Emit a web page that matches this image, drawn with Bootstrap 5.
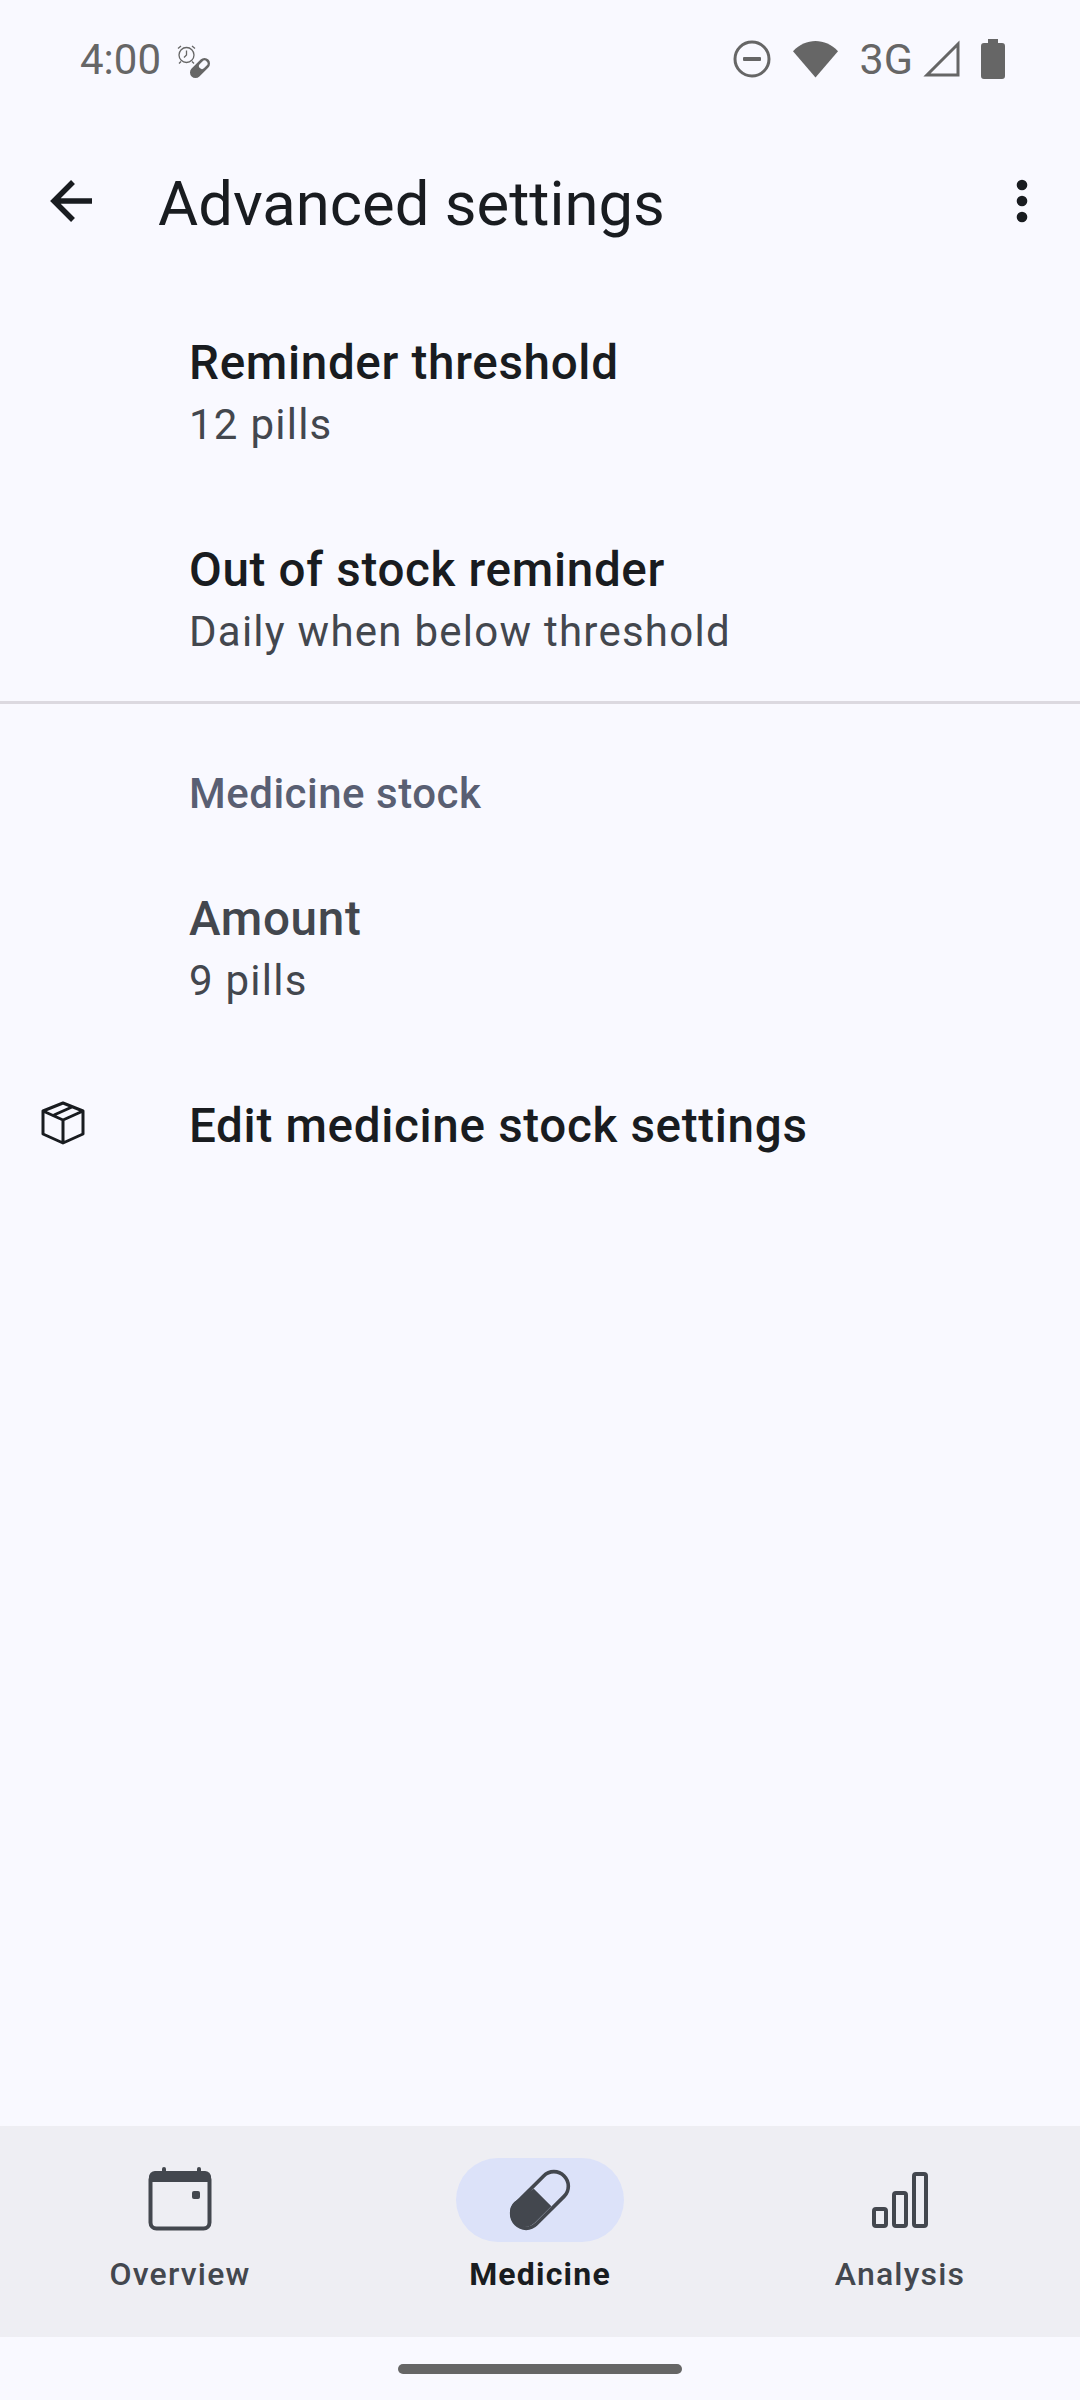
<!DOCTYPE html>
<html lang="en">
<head>
    <meta charset="UTF-8">
    <meta name="viewport" content="width=device-width, initial-scale=1.0">
    <title>Advanced settings</title>
    <link href="https://cdn.jsdelivr.net/npm/bootstrap@5.3.0/dist/css/bootstrap.min.css" rel="stylesheet">
    <style>
        body {
            background-color: #f9f9ff;
            font-family: Roboto, "Liberation Sans", sans-serif;
            color: #191c20;
        }
        .screen {
            width: 1080px;
            height: 2400px;
        }
        .status-bar {
            height: 116px;
            padding: 2px 75px 0 80px;
            color: #666;
        }
        .status-time {
            font-size: 42px;
            line-height: 1;
            margin-top: 2px;
        }
        .status-net {
            font-size: 43px;
            line-height: 1;
            margin: 0 10px 0 22px;
        }
        .status-gap {
            margin-right: 22px;
        }
        .status-gap-small {
            margin-right: 20px;
        }
        .app-bar {
            height: 175px;
            padding-right: 31px;
        }
        .app-bar-back {
            width: 158px;
            padding-left: 50px;
        }
        .app-bar-icon {
            margin-bottom: 5px;
        }
        .app-bar-title {
            font-size: 61.6px;
            line-height: 1;
            margin: 0;
            padding-top: 3px;
            font-weight: 400;
        }
        .pref-row {
            padding-left: 189px;
        }
        .pref-icon {
            width: 189px;
            padding: 0 0 5px 41px;
            margin-left: -189px;
        }
        .pref-title {
            font-size: 47.6px;
            font-weight: 500;
            line-height: 63px;
            letter-spacing: 0.67px;
            margin-top: 1.5px;
        }
        .pref-summary {
            font-size: 42px;
            line-height: 63px;
            letter-spacing: 1.25px;
            margin-top: -1.5px;
            color: #43474e;
        }
        .pref-muted {
            color: #43474e;
        }
        .first-row {
            margin-top: 39px;
            height: 207px;
        }
        .second-row {
            height: 164px;
        }
        .amount-row {
            height: 207px;
        }
        .pref-divider {
            height: 3px;
            background-color: #dcd9e0;
        }
        .group-title {
            font-size: 42px;
            font-weight: 500;
            line-height: 48px;
            letter-spacing: 0.5px;
            color: #595f73;
            padding-top: 66px;
            height: 182px;
        }
        .bottom-nav {
            height: 211px;
            margin-top: auto;
            background-color: #eeeef3;
        }
        .nav-cell {
            width: 360px;
            padding-top: 32px;
        }
        .nav-pill {
            width: 168px;
            height: 84px;
            border-radius: 42px;
        }
        .nav-pill-active {
            background-color: #dce2f9;
        }
        .nav-label {
            font-size: 32px;
            font-weight: 500;
            line-height: 44px;
            letter-spacing: 1.2px;
            margin-top: 10px;
            color: #43474e;
        }
        .nav-label-active {
            font-weight: 700;
            color: #191c20;
        }
        .gesture-area {
            height: 63px;
            padding-top: 27px;
        }
        .gesture-pill {
            width: 284px;
            height: 10px;
            border-radius: 5px;
            background-color: #666;
        }
    </style>
</head>
<body>
    <div class="screen d-flex flex-column">
        <div class="status-bar d-flex align-items-center justify-content-between">
            <div class="d-flex align-items-center gap-3">
                <span class="status-time">4:00</span>
                <svg width="34" height="40" viewBox="0 -6 34 40">
                    <circle cx="9.5" cy="10" r="7.5" fill="none" stroke="#666" stroke-width="1.3"/>
                    <path d="M9.5 5.5V10L7 12.5M1 3.5L4 1M18 3.5L15 1M4 16.5L2 18.5M15 16.5L17 18.5" fill="none" stroke="#666" stroke-width="1.3"/>
                    <path d="M18.5 27.5L27.5 18.5" stroke="#666" stroke-width="11" stroke-linecap="round"/>
                    <path d="M25 21L27.5 18.5" stroke="#f9f9ff" stroke-width="6" stroke-linecap="round"/>
                </svg>
            </div>
            <div class="d-flex align-items-center">
                <svg class="status-gap" width="38" height="38" viewBox="0 0 38 38">
                    <circle cx="19" cy="19" r="17" fill="none" stroke="#666" stroke-width="3"/>
                    <rect x="10" y="17" width="18" height="4" rx="1" fill="#666"/>
                </svg>
                <svg width="45" height="38" viewBox="0 0 46 38">
                    <path d="M0 11C13 -3 33 -3 46 11L23 38z" fill="#666"/>
                </svg>
                <span class="status-net">3G</span>
                <svg class="status-gap-small" width="38" height="38" viewBox="0 0 38 38">
                    <path d="M35 4V35H4z" fill="none" stroke="#666" stroke-width="3"/>
                </svg>
                <svg width="24" height="40" viewBox="0 0 24 40">
                    <path d="M7 0h10v4h4a3 3 0 0 1 3 3v30a3 3 0 0 1-3 3H3a3 3 0 0 1-3-3V7a3 3 0 0 1 3-3h4z" fill="#666"/>
                </svg>
            </div>
        </div>

        <div class="app-bar d-flex align-items-center">
            <div class="app-bar-back app-bar-icon">
                <svg class="d-block" width="42" height="44" viewBox="0 0 42 44">
                    <path d="M23 3L4 22l19 19M4 22h38" fill="none" stroke="#191c20" stroke-width="5.5"/>
                </svg>
            </div>
            <h1 class="app-bar-title flex-grow-1">Advanced settings</h1>
            <svg class="app-bar-icon" width="54" height="48" viewBox="0 0 54 48">
                <circle cx="27" cy="8" r="5.3" fill="#191c20"/>
                <circle cx="27" cy="24" r="5.3" fill="#191c20"/>
                <circle cx="27" cy="40" r="5.3" fill="#191c20"/>
            </svg>
        </div>

        <div class="pref-row first-row">
            <div class="pref-title">Reminder threshold</div>
            <div class="pref-summary">12 pills</div>
        </div>
        <div class="pref-row second-row">
            <div class="pref-title">Out of stock reminder</div>
            <div class="pref-summary">Daily when below threshold</div>
        </div>
        <div class="pref-divider"></div>
        <div class="pref-row group-title">Medicine stock</div>
        <div class="pref-row amount-row">
            <div class="pref-title pref-muted">Amount</div>
            <div class="pref-summary">9 pills</div>
        </div>
        <div class="pref-row d-flex align-items-center">
            <div class="pref-icon">
                <svg class="d-block" width="44" height="44" viewBox="0 0 44 44">
                    <path d="M2 10L22 2l20 8v23L22 42 2 33zM2 10l20 9 20-9M22 19v23M13 14L31 6" fill="none" stroke="#191c20" stroke-width="3" stroke-linejoin="round"/>
                </svg>
            </div>
            <div class="pref-title">Edit medicine stock settings</div>
        </div>

        <div class="bottom-nav d-flex">
            <div class="nav-cell d-flex flex-column align-items-center">
                <div class="nav-pill d-flex align-items-center justify-content-center">
                    <svg width="66" height="66" viewBox="0 0 66 66">
                        <rect x="3.5" y="6.5" width="59" height="55" rx="6" fill="none" stroke="#43474e" stroke-width="4"/>
                        <path d="M2 15V10a6 6 0 0 1 6-6h50a6 6 0 0 1 6 6v5z" fill="#43474e"/>
                        <rect x="15" y="0" width="4" height="6" rx="2" fill="#43474e"/>
                        <rect x="50" y="0" width="4" height="6" rx="2" fill="#43474e"/>
                        <rect x="45" y="24" width="8" height="8" rx="2" fill="#43474e"/>
                    </svg>
                </div>
                <div class="nav-label">Overview</div>
            </div>
            <div class="nav-cell d-flex flex-column align-items-center">
                <div class="nav-pill nav-pill-active d-flex align-items-center justify-content-center">
                    <svg width="64" height="64" viewBox="0 0 62 62">
                        <rect x="-2" y="17" width="66" height="28" rx="14" transform="rotate(-45 31 31)" fill="none" stroke="#43474e" stroke-width="3.5"/>
                        <path d="M25 20L42 37 26 53a14 14 0 0 1-20-20z" fill="#43474e"/>
                    </svg>
                </div>
                <div class="nav-label nav-label-active">Medicine</div>
            </div>
            <div class="nav-cell d-flex flex-column align-items-center">
                <div class="nav-pill d-flex align-items-center justify-content-center">
                    <svg width="56" height="56" viewBox="0 0 56 56">
                        <rect x="2" y="37" width="12" height="17" rx="2" fill="none" stroke="#43474e" stroke-width="4"/>
                        <rect x="22" y="21" width="12" height="33" rx="2" fill="none" stroke="#43474e" stroke-width="4"/>
                        <rect x="42" y="2" width="12" height="52" rx="2" fill="none" stroke="#43474e" stroke-width="4"/>
                    </svg>
                </div>
                <div class="nav-label">Analysis</div>
            </div>
        </div>
        <div class="gesture-area d-flex justify-content-center">
            <div class="gesture-pill"></div>
        </div>
    </div>

    <script src="https://cdn.jsdelivr.net/npm/bootstrap@5.3.0/dist/js/bootstrap.bundle.min.js"></script>
</body>
</html>
